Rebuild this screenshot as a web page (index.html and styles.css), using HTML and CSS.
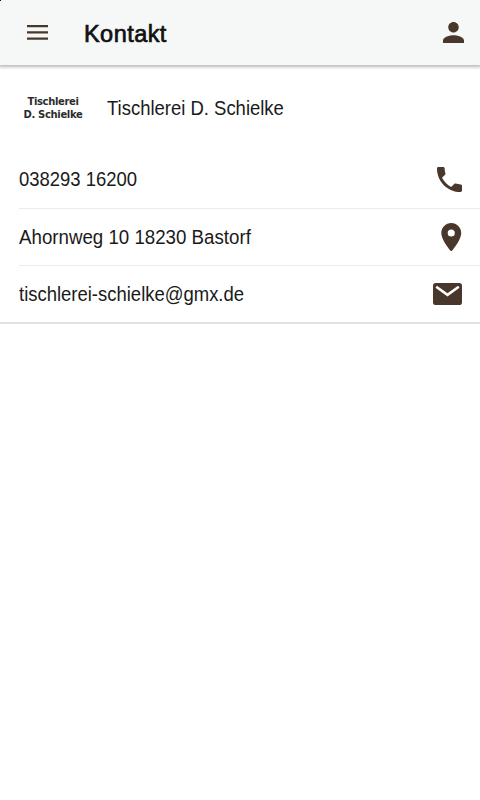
FILE: index.html
```html
<!DOCTYPE html>
<html lang="de">
<head>
<meta charset="utf-8">
<title>Kontakt</title>
<link rel="stylesheet" href="styles.css">
</head>
<body>
<header class="toolbar">
  <svg class="menu" viewBox="0 0 21 15"><path d="M0 0h21v2.200H0zM0 6.300h21v2.200H0zM0 12.600h21v2.200H0z"/></svg>
  <h1 class="title">Kontakt</h1>
  <svg class="person" viewBox="4 4 16 16"><path d="M12 12c2.210 0 4-1.790 4-4s-1.790-4-4-4-4 1.790-4 4 1.790 4 4 4zm0 2c-2.670 0-8 1.340-8 4v2h16v-2c0-2.660-5.330-4-8-4z"/></svg>
</header>
<main>
  <div class="company">
    <div class="logo"><span>Tischlerei</span><span>D. Schielke</span></div>
    <span class="text name">Tischlerei D. Schielke</span>
  </div>
  <ul class="list">
    <li class="row"><span class="text">038293 16200</span>
      <svg class="phone" viewBox="3 3 18 18"><path d="M6.620 10.790c1.440 2.830 3.760 5.140 6.590 6.590l2.200-2.200c.27-.27.67-.36 1.020-.24 1.120.37 2.330.57 3.570.57.55 0 1 .45 1 1V20c0 .55-.45 1-1 1C10.610 21 3 13.390 3 4c0-.55.45-1 1-1h3.500c.55 0 1 .45 1 1 0 1.250.2 2.450.57 3.570.11.35.03.74-.25 1.020l-2.200 2.200z"/></svg></li>
    <li class="row"><span class="text address">Ahornweg 10 18230 Bastorf</span>
      <svg class="pin" viewBox="5 2 14 20"><path d="M12 2C8.130 2 5 5.130 5 9c0 5.250 7 13 7 13s7-7.750 7-13c0-3.870-3.130-7-7-7zm0 9.500a2.500 2.500 0 1 1 0-5 2.500 2.500 0 0 1 0 5z"/></svg></li>
    <li class="row last"><span class="text">tischlerei-schielke@gmx.de</span>
      <svg class="mail" viewBox="0 0 29 22"><rect width="29" height="22" rx="2.800"/><path class="flap" d="M3.200 3.800 14.500 11.800l11.300-8"/></svg></li>
  </ul>
</main>
</body>
</html>
```
FILE: styles.css
```css
* { box-sizing: border-box; }
body {
  margin: 0;
  background: #fff;
  color: #1a1a1a;
  font: 19.700px/24px "Liberation Sans", Arial, sans-serif;
}
svg { display: block; flex: none; fill: #49372b; }
.toolbar {
  position: relative;
  display: flex;
  align-items: center;
  height: 65px;
  padding: 0 16px 0 26.500px;
  background: #f6f8f7;
  box-shadow: 0 1px 3px 1px rgba(0, 0, 0, .28);
}
.toolbar::before {
  content: "";
  position: absolute;
  top: 0;
  left: 0;
  width: 1px;
  height: 1px;
  background: #111133;
}
.menu { width: 21px; height: 15px; }
.title {
  flex: 1;
  margin: 2px 0 0 36.500px;
  color: #111;
  font-size: 23.500px;
  font-weight: 400;
  line-height: 30px;
  letter-spacing: .45px;
  -webkit-text-stroke: .7px #111;
}
.person { width: 21px; height: 21px; }
.company {
  display: flex;
  align-items: center;
  height: 86px;
  padding-left: 23px;
}
.logo {
  display: flex;
  flex-direction: column;
  width: 60px;
  margin-right: 23.500px;
  color: #2c2c2c;
  text-align: center;
  white-space: nowrap;
  font: bold 10px/13px "DejaVu Sans", sans-serif;
  letter-spacing: -.35px;
}
.text {
  display: block;
  white-space: nowrap;
  transform: scaleX(.938);
  transform-origin: left center;
}
.address { transform: scaleX(.95); }
.list { margin: 0; padding: 0; list-style: none; border-bottom: 2px solid #e2e2e2; }
.row {
  display: flex;
  align-items: center;
  justify-content: space-between;
  height: 57px;
  margin-left: 18.500px;
  padding-right: 18.500px;
  border-bottom: 1px solid #ebebeb;
}
.row:first-child { height: 58px; padding-bottom: 1px; }
.row.last { border-bottom: 0; height: 56px; }
.phone { width: 25px; height: 25px; }
.pin { width: 20.500px; height: 28.500px; }
.mail { width: 29px; height: 22px; }
.flap { fill: none; stroke: #fff; stroke-width: 2.600; }
```
